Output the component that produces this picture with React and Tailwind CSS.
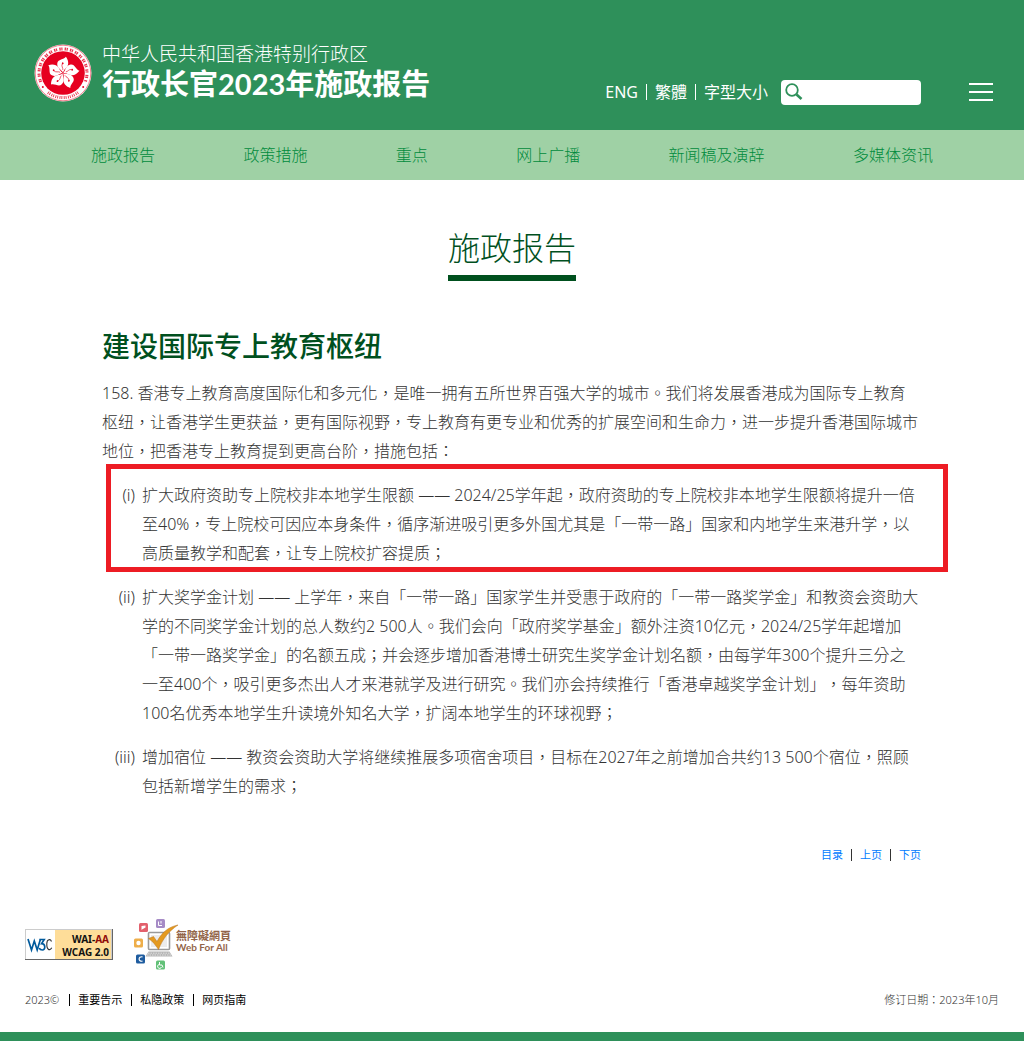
import { useState } from "react";

const NAV = ["施政报告", "政策措施", "重点", "网上广播", "新闻稿及演辞", "多媒体资讯"];

const ITEMS = [
  {
    no: "(i)",
    marked: true,
    text: "扩大政府资助专上院校非本地学生限额 —— 2024/25学年起，政府资助的专上院校非本地学生限额将提升一倍至40%，专上院校可因应本身条件，循序渐进吸引更多外国尤其是「一带一路」国家和内地学生来港升学，以高质量教学和配套，让专上院校扩容提质；",
  },
  {
    no: "(ii)",
    text: "扩大奖学金计划 —— 上学年，来自「一带一路」国家学生并受惠于政府的「一带一路奖学金」和教资会资助大学的不同奖学金计划的总人数约2 500人。我们会向「政府奖学基金」额外注资10亿元，2024/25学年起增加「一带一路奖学金」的名额五成；并会逐步增加香港博士研究生奖学金计划名额，由每学年300个提升三分之一至400个，吸引更多杰出人才来港就学及进行研究。我们亦会持续推行「香港卓越奖学金计划」，每年资助100名优秀本地学生升读境外知名大学，扩阔本地学生的环球视野；",
  },
  {
    no: "(iii)",
    text: "增加宿位 —— 教资会资助大学将继续推展多项宿舍项目，目标在2027年之前增加合共约13 500个宿位，照顾包括新增学生的需求；",
  },
];

function Emblem() {
  return (
    <svg viewBox="0 0 58 58" className="w-[58px] h-[58px] shrink-0" aria-hidden="true">
      <circle cx="29" cy="29" r="28.5" fill="#fff" />
      <circle cx="29" cy="29" r="27.8" fill="none" stroke="#e60020" strokeWidth="0.5" />
      <path d="M6.8 38 A24 24 0 1 1 51.2 38" fill="none" stroke="#e60020" strokeWidth="3" strokeDasharray="1.4 0.6 1.2 2.2" opacity="0.8" />
      <path d="M14 48.5 A24.5 24.5 0 0 0 44 48.5" fill="none" stroke="#e60020" strokeWidth="3" strokeDasharray="0.9 1 0.9 1.4" opacity="0.8" />
      <circle cx="8.8" cy="43" r="1" fill="#e60020" />
      <circle cx="49.2" cy="43" r="1" fill="#e60020" />
      <circle cx="29" cy="29" r="21.8" fill="#e60020" />
      {[8, 80, 152, 224, 296].map((a) => (
        <g key={a} transform={`rotate(${a} 29 29)`}>
          <path d="M29 28.6 C27 26 21.8 25 22 20 C22.2 15.6 27.8 16 29.6 12.4 C32.6 15.4 33.8 19.4 32 22.6 C30.4 25 29.4 26 29 28.6 Z" fill="#fff" />
          <path d="M28.4 26 C28.4 23.6 26.2 22.8 27 20" fill="none" stroke="#e60020" strokeWidth="0.6" />
          <circle cx="27.4" cy="19.4" r="0.9" fill="#e60020" />
        </g>
      ))}
    </svg>
  );
}

function W3CBadge() {
  return (
    <svg viewBox="0 0 88 31" className="w-[88px] h-[31px]" role="img" aria-label="WCAG 2.0 AA">
      <rect width="88" height="31" fill="#666" />
      <rect width="87" height="30" fill="#ccc" />
      <rect x="1" y="1" width="29" height="29" fill="#fff" />
      <rect x="30" y="1" width="56" height="29" fill="#fedd99" />
      <path d="M3 10 L6.5 21 L9.3 12 L12.2 21 L15.5 10" fill="none" stroke="#005a9c" strokeWidth="1.7" />
      <path d="M14.5 10.5 H19.2 L16.6 14.6 C20.6 14.6 20.8 21 17.3 21 C15.8 21 14.8 20.4 14.2 19" fill="none" stroke="#005a9c" strokeWidth="1.7" />
      <path d="M26.5 12.5 C25.5 9.8 22 9.8 21.8 14.5 C21.6 20.5 24.4 22.5 26.8 18.8" fill="none" stroke="#333" strokeWidth="1.1" />
      <g fontFamily="'Noto Sans', sans-serif" fontWeight="700" fontSize="10" fill="#111" textAnchor="end">
        <text x="84" y="14">WAI-<tspan fill="#900b09">AA</tspan></text>
        <text x="84" y="27">WCAG 2.0</text>
      </g>
    </svg>
  );
}

function WebForAllBadge() {
  return (
    <svg viewBox="0 0 100 52" className="w-[100px] h-[52px]" role="img" aria-label="無障礙網頁 Web For All">
      <rect x="6" y="5" width="9" height="9" rx="1.5" fill="#e2606c" />
      <path d="M8.5 12 V8 L12.5 7.5 V9.5 L9 11.5" fill="#fff" />
      <rect x="23" y="1" width="9" height="9" rx="1.5" fill="#a68bc6" />
      <path d="M25.5 3.5 V7.5 H29 M28 3 V5.5" fill="none" stroke="#fff" />
      <rect x="1" y="20.5" width="9" height="9" rx="1.5" fill="#eeae4a" />
      <circle cx="5.5" cy="25" r="2.2" fill="#fff" />
      <rect x="3" y="36.5" width="9" height="9" rx="1.5" fill="#1e5c9f" />
      <path d="M9.5 38.8 C5 38.2 5 43.8 9.5 43.2" fill="none" stroke="#fff" strokeWidth="1.2" />
      <rect x="23" y="42.5" width="9" height="9" rx="1.5" fill="#62c178" />
      <path d="M26.5 44 V47 H29 L30 49.5 M26 46.5 A2 2 0 1 0 28.5 49" fill="none" stroke="#fff" />
      <rect x="15.5" y="14.5" width="21" height="17" rx="1" fill="#fff" stroke="#9a9a9a" strokeWidth="1.6" />
      <rect x="18" y="17" width="16" height="12" fill="#ececec" />
      <path d="M15.5 33.5 H36.5 L39.5 38.5 H12.5 Z" fill="#b5b5b5" />
      <path d="M15 35.2 H37 M14 37 H38" stroke="#f2f2f2" strokeWidth="0.7" strokeDasharray="1.5 1" />
      <path d="M15.5 20.5 L20.5 18.5 L24 23.5 C29 14.5 35 9 45 7 C36 13 29.5 21 25.5 31.5 C22.5 27 19.5 23 15.5 20.5 Z" fill="#e49a20" stroke="#b8731a" strokeWidth="0.5" />
      <g fill="#936549" fontWeight="700" fontFamily="Lato, 'Noto Sans CJK TC', sans-serif">
        <text x="43" y="22" fontSize="11">無障礙網頁</text>
        <text x="43" y="33" fontSize="10">Web For All</text>
      </g>
    </svg>
  );
}

function Bar({ className }) {
  return <span aria-hidden="true" className={"w-px shrink-0 " + className} />;
}

export default function App() {
  const [query, setQuery] = useState("");

  return (
    <div className="bg-white text-[#333] font-light font-['Noto_Sans','Noto_Sans_CJK_TC',sans-serif] [text-spacing-trim:space-all]">
      <header className="bg-[#2e905a] text-white flex items-center h-[130px] pt-4 pl-[34px] pr-[31px]">
        <a href="#" className="flex items-center gap-[10px]">
          <Emblem />
          <span className="flex flex-col font-['Lato','Noto_Sans_CJK_TC',sans-serif] whitespace-nowrap">
            <span className="text-[19px] leading-[22px]">中华人民共和国香港特别行政区</span>
            <span className="text-[29px] leading-[38px] font-bold">行政长官2023年施政报告</span>
          </span>
        </a>
        <div className="ml-auto pt-[38px] flex items-center font-normal text-base leading-6">
          <a href="#">ENG</a>
          <Bar className="h-4 bg-white mx-2" />
          <a href="#">繁體</a>
          <Bar className="h-4 bg-white mx-2" />
          <a href="#">字型大小</a>
          <label className="ml-[13px] flex items-center w-[140px] h-[25px] rounded bg-white px-1">
            <svg viewBox="0 0 18 18" className="w-[18px] h-[18px] shrink-0" aria-hidden="true">
              <circle cx="7" cy="7" r="5.8" fill="none" stroke="#2e905a" strokeWidth="1.8" />
              <path d="M11.5 11.5 L16.5 16" stroke="#2e905a" strokeWidth="2.6" />
            </svg>
            <input
              type="text"
              aria-label="搜寻"
              value={query}
              onChange={(e) => setQuery(e.target.value)}
              className="flex-1 min-w-0 px-1 text-sm text-[#333] outline-none"
            />
          </label>
          <button type="button" aria-label="菜单" className="ml-12 flex flex-col gap-[6px] w-6">
            <span className="h-[2px] w-full bg-white" />
            <span className="h-[2px] w-full bg-white" />
            <span className="h-[2px] w-full bg-white" />
          </button>
        </div>
      </header>

      <nav className="bg-[#9fd1a5] h-[50px] px-[91px] flex items-center justify-between text-base text-[#008a3c]">
        {NAV.map((n) => (
          <a key={n} href="#">{n}</a>
        ))}
      </nav>

      <main className="pl-[102px] pr-[102px] pt-[43px]">
        <h1 className="w-fit mx-auto text-[32px] leading-[50px] pb-0.5 text-[#00501e] border-b-[6px] border-[#00501e]">施政报告</h1>

        <h2 className="mt-[45px] text-[28px] leading-10 font-medium text-[#00501e]">建设国际专上教育枢纽</h2>

        <p className="mt-[13px] pr-px text-base leading-[29px]">
          158. 香港专上教育高度国际化和多元化，是唯一拥有五所世界百强大学的城市。我们将发展香港成为国际专上教育枢纽，让香港学生更获益，更有国际视野，专上教育有更专业和优秀的扩展空间和生命力，进一步提升香港国际城市地位，把香港专上教育提到更高台阶，措施包括：
        </p>

        <ol className="mt-[15px] pr-px flex flex-col gap-[15px] text-base leading-[29px]">
          {ITEMS.map((item) => (
            <li key={item.no} className="relative flex gap-[7px]">
              <span className="w-[33px] shrink-0 text-right">{item.no}</span>
              <span className="flex-1">{item.text}</span>
              {item.marked && (
                <span aria-hidden="true" className="absolute left-1 -right-[27px] -top-[17px] -bottom-1 border-[5px] border-[#ed1c24]" />
              )}
            </li>
          ))}
        </ol>

        <div className="mt-11 pr-px flex justify-end items-center text-[11px] leading-5 text-[#007bff] font-normal">
          <a href="#">目录</a>
          <Bar className="h-3 bg-[#333] mx-2" />
          <a href="#">上页</a>
          <Bar className="h-3 bg-[#333] mx-2" />
          <a href="#">下页</a>
        </div>
      </main>

      <footer className="mt-[53px] border-b-[9px] border-[#2e905a] px-[25px] pb-[22px]">
        <div className="flex items-center gap-5">
          <a href="#"><W3CBadge /></a>
          <a href="#"><WebForAllBadge /></a>
        </div>
        <div className="mt-5 flex items-center text-[11px] leading-5">
          <span>2023©</span>
          <Bar className="h-3 bg-black ml-[10px] mr-2" />
          <a href="#" className="text-black font-normal">重要告示</a>
          <Bar className="h-3 bg-black ml-[9px] mr-2" />
          <a href="#" className="text-black font-normal">私隐政策</a>
          <Bar className="h-3 bg-black ml-[9px] mr-2" />
          <a href="#" className="text-black font-normal">网页指南</a>
          <span className="ml-auto">修订日期：2023年10月</span>
        </div>
      </footer>
    </div>
  );
}
